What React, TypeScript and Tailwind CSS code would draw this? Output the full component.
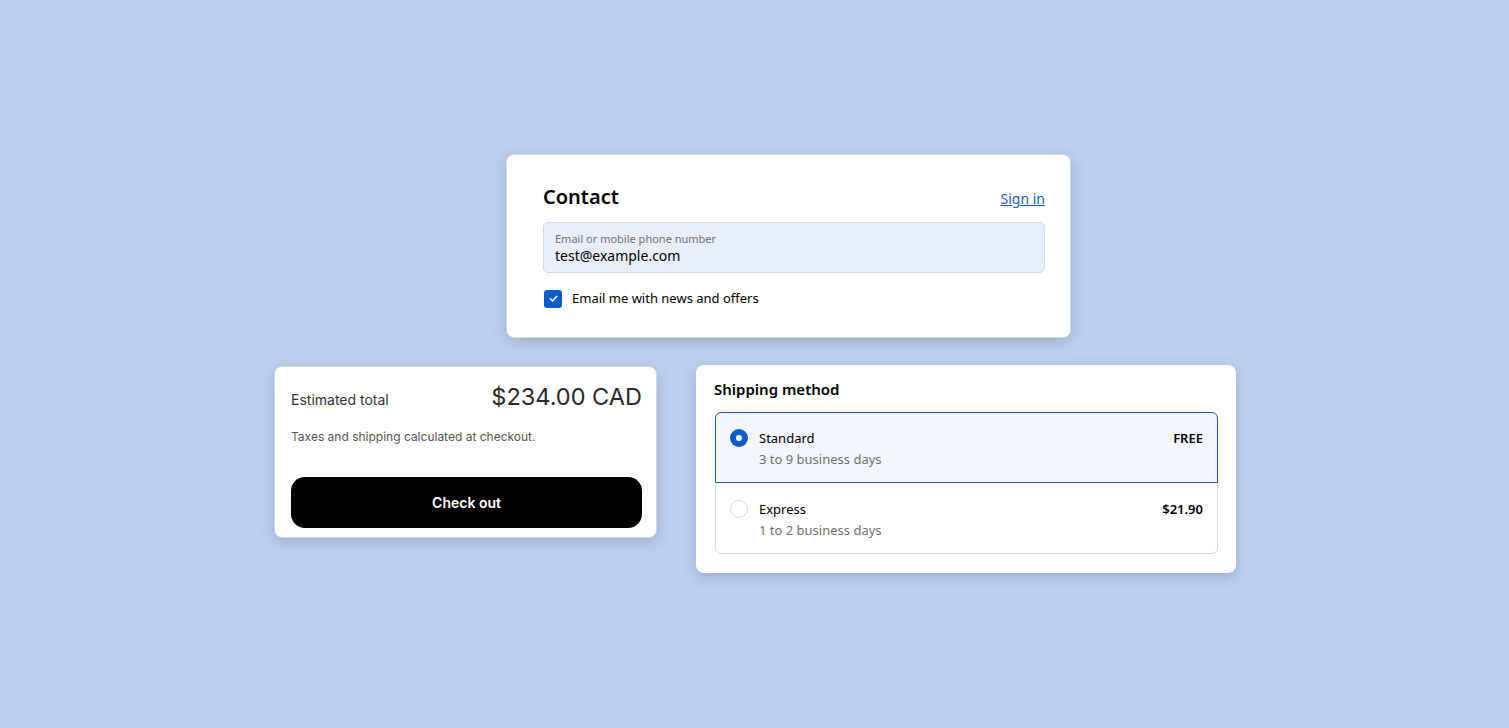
import React from "react";

const seg = { fontFamily: '"Noto Sans", "Open Sans", sans-serif' };
const inter = { fontFamily: 'Inter, "Liberation Sans", sans-serif' };

export default function App() {
  return (
    <div className="min-h-[728px] w-full bg-[#bdcfee] pt-[154px]">
      <div className="pl-[506px]">
        <div
          className="w-[565px] h-[184px] rounded-lg bg-white border border-[#d6dbe4] shadow-[0_4px_14px_rgba(60,80,120,0.25)] pl-[36px] pr-[25px] pt-[24px]"
          style={seg}
        >
          <div className="flex items-end justify-between h-[32px]">
            <h2 className="text-[20px] font-semibold text-black leading-[28px]">Contact</h2>
            <a className="text-[14px] text-[#1c5fb8] underline leading-[24px]">Sign in</a>
          </div>
          <div className="mt-[11px] h-[51px] rounded-[5px] border border-[#d3d9e3] bg-[#e8effb] px-[11px] pt-[8px]">
            <div className="text-[11px] leading-[15px] text-[#707070]">Email or mobile phone number</div>
            <div className="text-[14px] leading-[19px] text-black">test@example.com</div>
          </div>
          <div className="mt-[16px] flex items-center gap-[10px] pl-px">
            <div className="w-[18px] h-[18px] rounded-[3px] bg-[#0b5ccc] flex items-center justify-center">
              <svg width="11" height="11" viewBox="0 0 12 12" fill="none">
                <path d="M2.5 6.2 L5 8.6 L9.6 3.6" stroke="white" strokeWidth="1.6" strokeLinecap="round" strokeLinejoin="round" />
              </svg>
            </div>
            <span className="text-[13px] text-black">Email me with news and offers</span>
          </div>
        </div>
      </div>

      <div className="mt-[27px] pl-[274px] flex items-start gap-[39px]">
        <div
          className="mt-px w-[383px] h-[172px] rounded-lg bg-white border border-[#d2d8e2] shadow-[0_4px_14px_rgba(60,80,120,0.25)] pl-[16px] pr-[14px] pt-[14px]"
          style={inter}
        >
          <div className="flex items-center justify-between h-[32px]">
            <span className="text-[14px] text-[#333] mt-[5px]">Estimated total</span>
            <span className="text-[23.5px] text-[#2a2a2a]">$234.00 CAD</span>
          </div>
          <div className="mt-[15px] text-[12px] text-[#555]">Taxes and shipping calculated at checkout.</div>
          <button className="mt-[31px] w-full h-[51px] rounded-[14px] bg-black text-white text-[14px] font-semibold">
            Check out
          </button>
        </div>

        <div
          className="w-[540px] h-[208px] rounded-lg bg-white shadow-[0_4px_14px_rgba(60,80,120,0.25)] pl-[18px] pr-[18px] pt-[14px]"
          style={seg}
        >
          <h3 className="text-[15px] font-semibold text-black leading-[20px]">Shipping method</h3>
          <div className="mt-[13px] ml-px h-[142px] rounded-[6px] border border-[#d9d9d9]">
            <div className="h-[71px] -m-px rounded-t-[6px] border border-[#1a5fb4] bg-[#f4f6fe] flex justify-between pl-[14px] pr-[14px] pt-[15px]">
              <div className="flex gap-[11px]">
                <div className="w-[18px] h-[18px] rounded-full bg-[#0b5ccc] flex items-center justify-center mt-[1px]">
                  <div className="w-[6px] h-[6px] rounded-full bg-white" />
                </div>
                <div>
                  <div className="text-[13px] leading-[20px] text-black">Standard</div>
                  <div className="text-[13px] leading-[20px] text-[#707070] mt-px">3 to 9 business days</div>
                </div>
              </div>
              <div className="text-[13px] font-semibold leading-[20px] text-black">FREE</div>
            </div>
            <div className="h-[70px] mt-px flex justify-between pl-[14px] pr-[14px] pt-[16px]">
              <div className="flex gap-[11px]">
                <div className="w-[18px] h-[18px] rounded-full border border-[#d9d9d9] bg-white mt-[1px]" />
                <div>
                  <div className="text-[13px] leading-[20px] text-black">Express</div>
                  <div className="text-[13px] leading-[20px] text-[#707070] mt-px">1 to 2 business days</div>
                </div>
              </div>
              <div className="text-[13px] font-semibold leading-[20px] text-black">$21.90</div>
            </div>
          </div>
        </div>
      </div>
    </div>
  );
}
